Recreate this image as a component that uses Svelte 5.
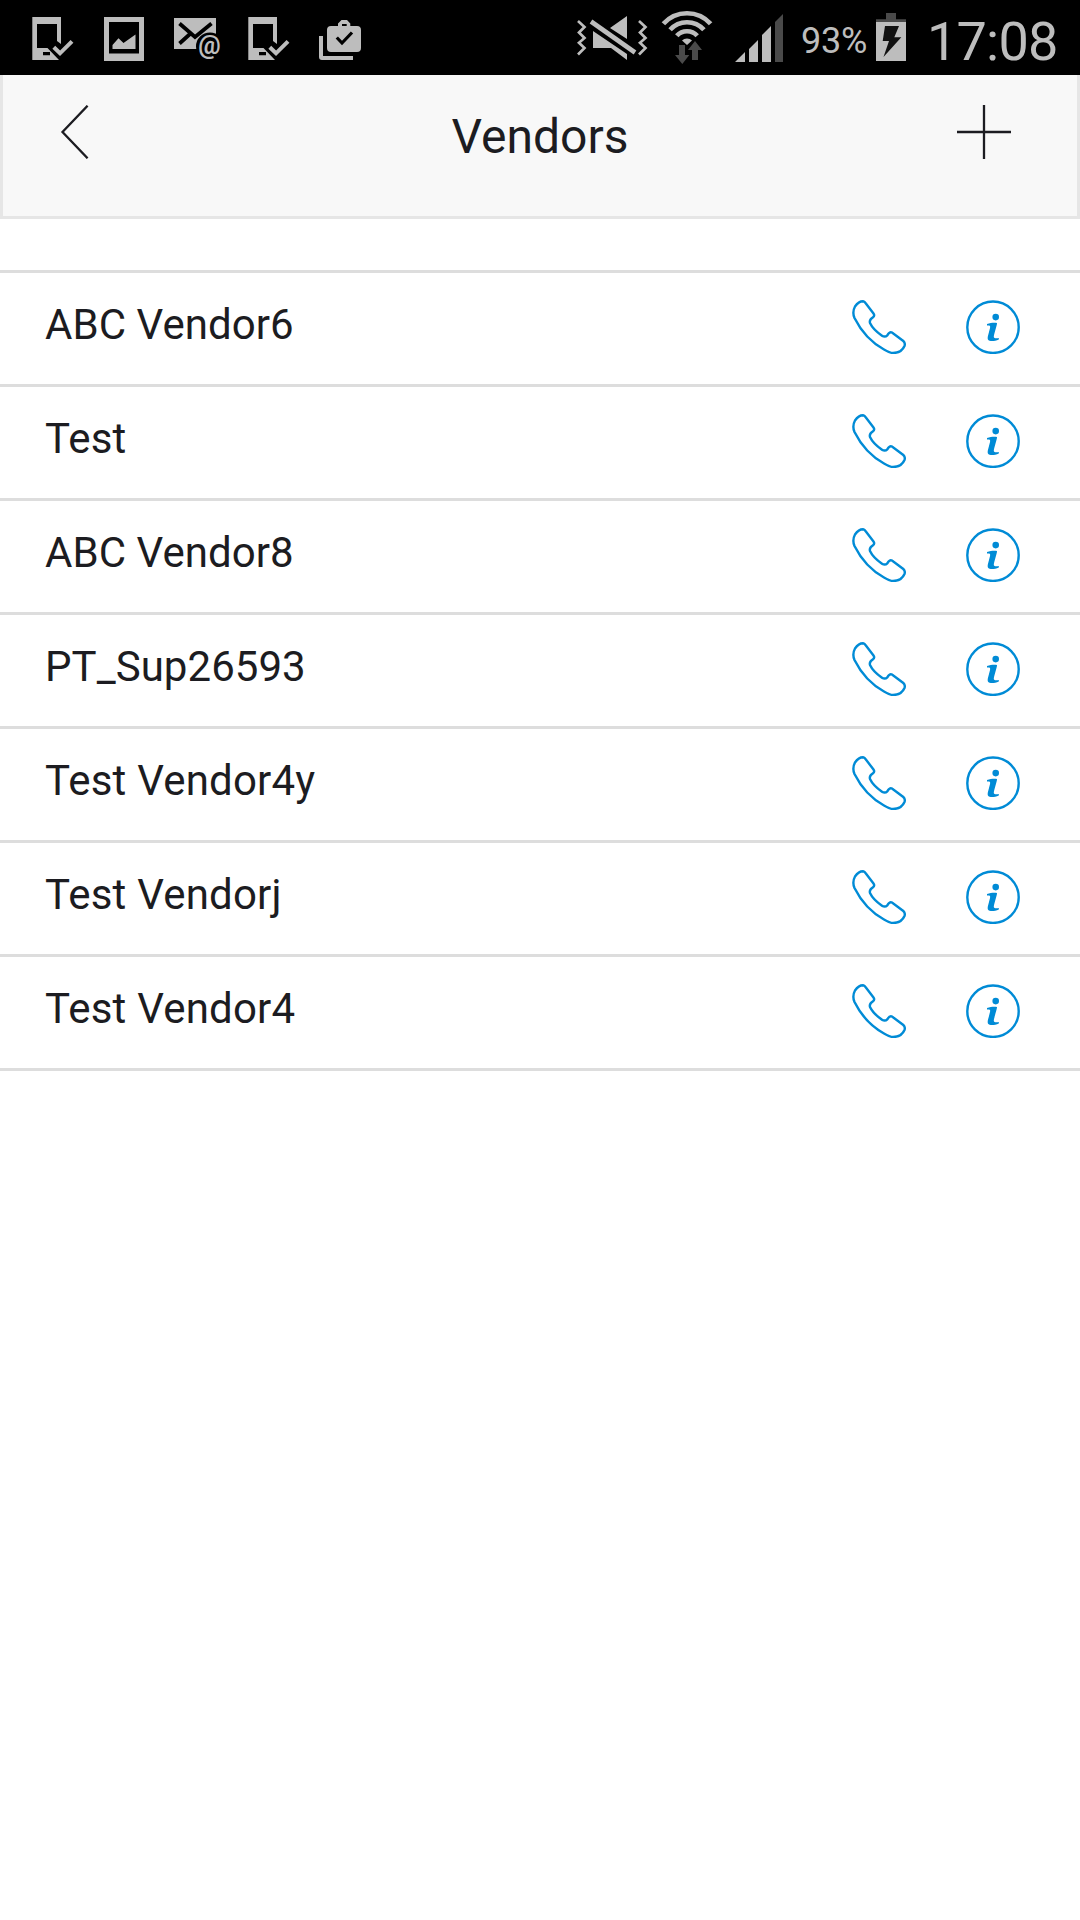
<script>
  const vendors = [
    'ABC Vendor6',
    'Test',
    'ABC Vendor8',
    'PT_Sup26593',
    'Test Vendor4y',
    'Test Vendorj',
    'Test Vendor4',
  ];
</script>

{#snippet deviceCheck()}
  <svg class="notice" viewBox="17 0 72 75">
    <path class="lit" fill-rule="evenodd" d="M32.3 17H61V44L57 41V24H37V48H47.5L59 60H32.3ZM43 52V55.3H50V52Z" />
    <path class="lit-line" stroke-width="4" d="M53.8 47.2L60 53.3L72 41.3" />
  </svg>
{/snippet}

<div class="screen">
  <div class="status">
    <div class="notices">
      {@render deviceCheck()}
      <svg class="notice" viewBox="89 0 72 75">
        <path class="lit" fill-rule="evenodd" d="M104 17H144V61H104ZM109 22V53.5H139V22Z" />
        <path class="lit" d="M112.5 49V45L118.5 38.3L123.5 43L135.5 34.5V49Z" />
      </svg>
      <svg class="notice" viewBox="161 0 72 75">
        <path class="lit" d="M174 18H216V49H174Z" />
        <path class="ink-line" stroke-width="3.8" d="M179.5 23.5L195 37L211.5 23.5M179.5 43.5L190 34" />
        <circle cx="210" cy="46.5" r="14" />
        <text class="at" x="198.2" y="53.5">@</text>
      </svg>
      {@render deviceCheck()}
      <svg class="notice" viewBox="305 0 72 75">
        <path class="lit" d="M319 36H323V56H353V60H322Q319 60 319 57Z" />
        <path class="lit" fill-rule="evenodd" d="M331 26H338V23.5L341.5 20H347L350.3 23.5V26H357Q361 26 361 30V48Q361 52 357 52H331Q327 52 327 48V30Q327 26 331 26ZM342 24V26H346.7V24Z" />
        <path class="ink-line" stroke-width="3.2" d="M336.8 37.5L342 43L352 32.5" />
      </svg>
    </div>

    <div class="system">
      <svg width="85" height="75" viewBox="570 0 85 75">
        <path class="lit-line" stroke-width="2.7" d="M578 21L584.5 27L579 32.5L584.5 38L579 42.7L584.5 48L578 54.5M639 21L645.5 27L640 32.5L645.5 38L640 42.7L645.5 48L639 54.5" />
        <path class="lit" d="M610 28L627 16V39ZM593 31L627 54V60L611 48H593Z" />
        <path class="lit-line" stroke-width="4.6" d="M591 21.5L635 52.5" />
      </svg>
      <svg width="60" height="75" viewBox="655 0 60 75">
        <path class="lit-line" stroke-width="4.7" d="M663.4 23.8A31.7 31.7 0 0 1 710.6 23.8M670.1 29.8A22.7 22.7 0 0 1 703.9 29.8M676.8 35.8A13.7 13.7 0 0 1 697.2 35.8" />
        <path class="lit" d="M682 40.5A7 7 0 0 1 692 40.5L687 45Z" />
        <path class="dim" d="M679 45H685V55H689.3L682.3 64L675 55H679ZM692 60V50H688L695 41L702 50H698V60Z" />
      </svg>
      <svg width="75" height="75" viewBox="715 0 75 75">
        <path class="lit" d="M735 62L745 52V62ZM749 62V49L758 40V62ZM762 62V35L771 26V62Z" />
        <path class="dim" d="M775 62V22L783 14V62Z" />
      </svg>
      <span class="charge">93%</span>
      <svg width="40" height="75" viewBox="870 0 40 75">
        <path class="dim" d="M886 13H896V19.3H906V22H876V19.3H886Z" />
        <path class="lit" d="M876 22H906V61H876Z" />
        <path class="bolt" d="M885 26H899L894.3 37.2H901.3L883.5 57L889 41H882.7Z" />
      </svg>
      <span class="clock">17:08</span>
    </div>
  </div>

  <header>
    <button aria-label="Back">
      <svg width="54" height="54" viewBox="48 105 54 54">
        <path d="M87.6 105.7L62.5 132L87.6 158.3" />
      </svg>
    </button>
    <h1>Vendors</h1>
    <button aria-label="Add vendor">
      <svg width="54" height="54" viewBox="957 105 54 54">
        <path d="M984 105V159M957 132H1011" />
      </svg>
    </button>
  </header>

  <ul>
    {#each vendors as vendor}
      <li>
        <span class="name" class:loose={vendor.startsWith('T')}>{vendor}</span>
        <svg class="action" viewBox="32 30 54 54">
          <path d="M45.5 33L53.5 43.5Q55 45.5 53 47.3Q49 49.8 50 53Q53 59.5 62 65.7Q65 67.7 67.3 65.3Q69.7 61.3 72 62.5L83.3 71Q85.5 73 84.5 76Q81.5 82.9 73 83Q70 83 64 79.5Q45 69 34.5 48Q32 42 35 36.5Q38.5 31.3 43 31.3Q44.5 31.5 45.5 33Z" />
        </svg>
        <svg class="action" viewBox="966 300 54 54">
          <circle cx="993" cy="327.2" r="25.7" />
          <circle class="solid" cx="995.7" cy="317.1" r="3.3" />
          <path class="solid" d="M987 324.1C990.5 322.8 993.5 322.6 997 322.9C997.2 325 993.6 335 993.8 337C994 338.6 996.5 338.5 998.8 338V339.5C995.5 340.8 992.5 341.5 989.6 340.8C986.2 339.7 988.2 335.5 989 332C989.8 328.5 990.6 326.5 989.9 325.9C989.2 325.4 988 325.7 987 325.6Z" />
        </svg>
      </li>
    {/each}
  </ul>
</div>

<style>
  :global(body) {
    margin: 0;
    background: #fff;
  }
  .screen {
    width: 1080px;
    height: 1920px;
    overflow: hidden;
    background: #fff;
    color: #1c1c21;
    font-family: Roboto, sans-serif;
  }
  svg {
    display: block;
    flex: none;
  }
  .status {
    display: flex;
    justify-content: space-between;
    height: 75px;
    padding: 0 21px 0 17px;
    background: #000;
    color: #bdbdbd;
  }
  .notices,
  .system {
    display: flex;
  }
  .notice {
    width: 72px;
    height: 75px;
  }
  .lit {
    fill: #bdbdbd;
  }
  .dim {
    fill: #4a4a4a;
  }
  .bolt {
    fill: #111;
  }
  .lit-line {
    fill: none;
    stroke: #bdbdbd;
  }
  .ink-line {
    fill: none;
    stroke: #000;
  }
  .at {
    fill: #bdbdbd;
    font-size: 25px;
    font-weight: 700;
  }
  .charge {
    width: 80px;
    box-sizing: border-box;
    padding: 1px 0 0 11px;
    font-size: 36px;
    line-height: 80px;
    letter-spacing: -0.2px;
    white-space: nowrap;
  }
  .clock {
    width: 149px;
    box-sizing: border-box;
    padding-left: 17px;
    font-size: 54px;
    line-height: 84px;
    letter-spacing: -0.8px;
    white-space: nowrap;
  }
  header {
    display: flex;
    justify-content: space-between;
    box-sizing: border-box;
    height: 144px;
    padding: 30px 66px 0 45px;
    border: 3px solid #e6e6e6;
    border-top: 0;
    background: #f8f8f8;
  }
  button {
    height: 54px;
    padding: 0;
    border: 0;
    background: none;
  }
  button path {
    fill: none;
    stroke: #1c1c21;
    stroke-width: 2.3;
  }
  h1 {
    margin: 0 0 0 21px;
    font-size: 48px;
    font-weight: 400;
    line-height: 64px;
  }
  ul {
    margin: 51px 0 0;
    padding: 0;
    border-top: 3px solid #ddd;
    list-style: none;
  }
  li {
    display: flex;
    gap: 60px;
    box-sizing: border-box;
    height: 114px;
    padding: 27px 60px 0 45px;
    border-bottom: 3px solid #ddd;
  }
  .name {
    flex: 1;
    font-size: 42px;
    line-height: 50px;
    letter-spacing: 0.05px;
  }
  .loose {
    letter-spacing: 0.2px;
  }
  .action {
    width: 54px;
    height: 54px;
    fill: none;
    stroke: #008bd6;
    stroke-width: 2.4;
  }
  .solid {
    fill: #008bd6;
    stroke: none;
  }
</style>
